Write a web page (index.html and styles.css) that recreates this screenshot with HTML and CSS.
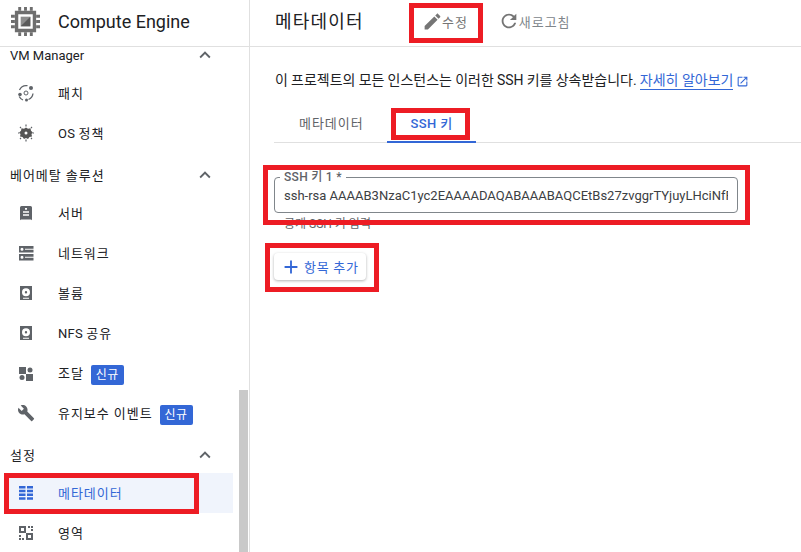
FILE: index.html
```html
<!DOCTYPE html>
<html lang="ko">
<head>
<meta charset="utf-8">
<title>메타데이터 - Compute Engine</title>
<link rel="stylesheet" href="styles.css">
</head>
<body>
<div class="app">
  <aside class="sidebar">
    <div class="brand">
      <svg class="chip" viewBox="0 0 30 30" aria-hidden="true">
        <path fill="#6e6e6e" d="M7.500 0h3v4h-3zM13.500 0h3v4h-3zM19.500 0h3v4h-3zM7.500 26h3v4h-3zM13.500 26h3v4h-3zM19.500 26h3v4h-3zM0 8h4v3H0zM0 13.500h4v3H0zM0 19h4v3H0zM26 8h4v3h-4zM26 13.500h4v3h-4zM26 19h4v3h-4z"/>
        <path fill="#6e6e6e" fill-rule="evenodd" d="M4 4h22v22H4zm3.500 3.500v15h15v-15z"/>
        <rect x="10" y="10" width="10" height="10" fill="#8c8c8c"/>
        <path fill="#5a5a5a" d="M20 10v10H10z"/>
      </svg>
      <span class="brand-name">Compute Engine</span>
    </div>
    <nav class="nav">
      <div class="nav-scroll">
        <div class="group"><span>VM Manager</span><svg class="chev" viewBox="0 0 24 24"><path d="M12 8l-6 6 1.410 1.410L12 10.830l4.590 4.580L18 14z"/></svg></div>
        <a class="item"><svg class="ico" viewBox="0 0 22 22"><circle cx="11" cy="11" r="2" fill="none" stroke="#5f6368" stroke-width="1"/><path fill="none" stroke="#5f6368" stroke-width="1.300" d="M4.500 8a7.500 7.500 0 0 1 8-4.300M18 11.500a7.500 7.500 0 0 1-4.500 6M8 18a7.500 7.500 0 0 1-3.800-3.500"/><circle cx="16" cy="6" r="2" fill="#5f6368"/><circle cx="11.500" cy="18" r="1.500" fill="#5f6368"/><circle cx="5" cy="12.500" r="1.800" fill="#5f6368"/></svg><span class="ko">패치</span></a>
        <a class="item"><svg class="ico" viewBox="0 0 22 22"><path fill="#555" d="M11 5.500l2 1.300 2.500-.5.500 2.500 1.800 1.700-1.300 1.500.5 2.500-2.500.5-1.500 1.900-2-1-2 1-1.500-1.900-2.500-.5.500-2.500-1.300-1.500L6 8.800l.5-2.500 2.500.5z"/><circle cx="11" cy="11" r="1.500" fill="#fff"/><path stroke="#5f6368" stroke-width="1.200" d="M11 2.500v2M11 17.500v2M3 11h1.500M17.500 11H19M5 5l1 1M16 16l1 1M17 5l-1 1M6 16l-1 1"/></svg><span><span class="en">OS</span> <span class="ko">정책</span></span></a>
        <div class="group spaced"><span class="ko">베어메탈 솔루션</span><svg class="chev" viewBox="0 0 24 24"><path d="M12 8l-6 6 1.410 1.410L12 10.830l4.590 4.580L18 14z"/></svg></div>
        <a class="item"><svg class="ico" viewBox="0 0 22 22"><path fill="#5f6368" fill-rule="evenodd" d="M6.500 4h9A1.500 1.500 0 0 1 17 5.500V17.500l-1 .8v-.8H6v.8l-1-.8V5.500A1.500 1.500 0 0 1 6.500 4zM10 6v1.800h2V6zM8 9.300v1.500h6V9.300zm0 3v1.500h6v-1.500z"/></svg><span class="ko">서버</span></a>
        <a class="item"><svg class="ico" viewBox="0 0 22 22"><path fill="#5f6368" fill-rule="evenodd" d="M4 4h14.500v6.500H4zm0 8h14.500v6.500H4zM7 5.700a1.500 1.500 0 1 0 0 3 1.500 1.500 0 0 0 0-3zm0 8a1.500 1.500 0 1 0 0 3 1.500 1.500 0 0 0 0-3zM10 6.700v1h8.500v-1zm0 8v1h8.500v-1z"/></svg><span class="ko">네트워크</span></a>
        <a class="item"><svg class="ico" viewBox="0 0 22 22"><path fill="#5f6368" fill-rule="evenodd" d="M5 4h12v14H5zm6 2.300a4 4 0 1 0 0 8 4 4 0 0 0 0-8zm0 2.800a1.200 1.200 0 1 1 0 2.400 1.200 1.200 0 0 1 0-2.400zM8 15.800v.9h6v-.9z"/></svg><span class="ko">볼륨</span></a>
        <a class="item"><svg class="ico" viewBox="0 0 22 22"><path fill="#5f6368" fill-rule="evenodd" d="M5 4h12v14H5zm6 2.300a4 4 0 1 0 0 8 4 4 0 0 0 0-8zm0 2.800a1.200 1.200 0 1 1 0 2.400 1.200 1.200 0 0 1 0-2.400zM8 15.800v.9h6v-.9z"/></svg><span><span class="en">NFS</span> <span class="ko">공유</span></span></a>
        <a class="item"><svg class="ico" viewBox="0 0 22 22"><path fill="#5f6368" d="M4 5h7v7H4zM11 12h7v7h-7z"/><circle cx="15" cy="8" r="2.500" fill="#5f6368"/><circle cx="7" cy="15.500" r="2.500" fill="#5f6368"/></svg><span class="ko">조달</span><em class="badge">신규</em></a>
        <a class="item"><svg class="ico" viewBox="0 0 24 24"><path fill="#5f6368" d="M22.700 19l-9.100-9.100c.9-2.300.4-5-1.500-6.900-2-2-5-2.400-7.400-1.300L9 6 6 9 1.600 4.700C.4 7.100.9 10.100 2.900 12.100c1.900 1.900 4.600 2.400 6.900 1.500l9.100 9.100c.4.400 1 .4 1.400 0l2.300-2.300c.5-.4.5-1.100.1-1.400z" transform="translate(2.500 2.500) scale(.8)"/></svg><span class="ko">유지보수 이벤트</span><em class="badge">신규</em></a>
        <div class="group spaced"><span class="ko">설정</span><svg class="chev" viewBox="0 0 24 24"><path d="M12 8l-6 6 1.410 1.410L12 10.830l4.590 4.580L18 14z"/></svg></div>
        <a class="item active"><svg class="ico" viewBox="0 0 22 22"><path fill="#3367d6" d="M4 4h6.500v2.500H4zM12 4h6v2.500h-6zM4 7.750h6.500v2.500H4zM12 7.750h6v2.500h-6zM4 11.500h6.500V14H4zM12 11.500h6V14h-6zM4 15.250h6.500v2.500H4zM12 15.250h6v2.500h-6z"/></svg><span class="ko">메타데이터</span></a>
        <a class="item"><svg class="ico" viewBox="0 0 22 22"><path fill="#5f6368" fill-rule="evenodd" d="M4 4h7v7H4zm2 2v3h3V6zM11 11h7v7h-7zm2 2v3h3v-3zM13 4h2v2h-2zM16 4h2v2h-2zM16 7h2v2h-2zM4 13h2v2H4zM4 16h2v2H4zM7 16h2v2H7z"/></svg><span class="ko">영역</span></a>
      </div>
      <div class="scrollbar"></div>
    </nav>
  </aside>
  <main class="main">
    <header class="topbar">
      <h1>메타데이터</h1>
      <button class="tool edit"><svg viewBox="0 0 24 24"><path d="M3 17.250V21h3.750L17.810 9.940l-3.750-3.750L3 17.250zM20.710 7.040c.39-.39.39-1.020 0-1.410l-2.340-2.340c-.39-.39-1.020-.39-1.410 0l-1.830 1.830 3.750 3.750 1.830-1.830z"/></svg><span class="ko">수정</span></button>
      <button class="tool refresh"><svg viewBox="0 0 24 24"><path d="M17.650 6.350C16.200 4.900 14.210 4 12 4c-4.420 0-7.990 3.580-7.990 8s3.570 8 7.990 8c3.730 0 6.840-2.550 7.730-6h-2.080c-.82 2.330-3.040 4-5.650 4-3.310 0-6-2.690-6-6s2.690-6 6-6c1.660 0 3.140.69 4.220 1.780L13 11h7V4l-2.350 2.350z"/></svg><span class="ko">새로고침</span></button>
    </header>
    <section class="content">
      <p class="desc"><span>이 프로젝트의 모든 인스턴스는 이러한 SSH 키를 상속받습니다.&nbsp;</span><a class="link">자세히 알아보기</a><svg class="ext" viewBox="0 0 24 24"><path d="M19 19H5V5h7V3H5c-1.110 0-2 .9-2 2v14c0 1.100.89 2 2 2h14c1.100 0 2-.9 2-2v-7h-2v7zM14 3v2h3.590l-9.830 9.830 1.410 1.410L19 6.410V10h2V3h-7z"/></svg></p>
      <div class="tabs">
        <div class="tab"><span class="ko">메타데이터</span></div>
        <div class="tab selected">SSH 키</div>
      </div>
      <div class="field">
        <span class="legend">SSH 키 1 *</span>
        <div class="value">ssh-rsa AAAAB3NzaC1yc2EAAAADAQABAAABAQCEtBs27zvggrTYjuyLHciNfRkJ2mVxQ</div>
      </div>
      <div class="hint">공개 SSH 키 입력</div>
      <button class="add"><svg viewBox="0 0 24 24"><path d="M19 13h-6v6h-2v-6H5v-2h6V5h2v6h6v2z"/></svg><span class="ko-add">항목 추가</span></button>
    </section>
  </main>
</div>
<div class="mark m-side"></div>
<div class="mark m-edit"></div>
<div class="mark m-tab"></div>
<div class="mark m-field"></div>
<div class="mark m-add"></div>
</body>
</html>
```
FILE: styles.css
```css
* { box-sizing: border-box; }
html, body { margin: 0; height: 100%; overflow: hidden; background: #fff; }
body {
  position: relative;
  font-family: Roboto, "Noto Sans CJK KR", sans-serif;
  color: #202124;
  font-size: 13px;
}
.app { display: flex; height: 552px; }
.ko { letter-spacing: .95px; }
.en { letter-spacing: .3px; }

.sidebar {
  width: 250px;
  flex: none;
  border-right: 1px solid #e0e0e0;
  display: flex;
  flex-direction: column;
}
.brand {
  height: 47px;
  flex: none;
  border-bottom: 1px solid #e0e0e0;
  display: flex;
  align-items: center;
  padding: 0 0 4px 11px;
}
.chip { width: 29px; height: 29px; margin-right: 18px; }
.brand-name { font-size: 18px; }
.nav { position: relative; flex: 1; overflow: hidden; }
.nav-scroll { margin-top: -10px; width: 233px; }
.group {
  height: 36px;
  display: flex;
  align-items: center;
  justify-content: space-between;
  padding: 0 18px 0 10px;
  font-size: 13px;
}
.group.spaced { margin-top: 4px; }
.group.spaced > span { padding-bottom: 2px; }
.chev { width: 22px; height: 22px; fill: #5f6368; margin-right: -1px; }
.item {
  height: 40px;
  display: flex;
  align-items: center;
  padding-left: 15px;
  font-size: 13px;
}
.item > span { padding-bottom: 2px; }
.ico { width: 22px; height: 22px; margin-right: 21px; flex: none; }
.item.active { background: #f0f4fc; color: #3367d6; margin-left: 4px; padding-left: 11px; }
.badge {
  font-style: normal;
  background: #3367d6;
  color: #fff;
  font-size: 12px;
  letter-spacing: .5px;
  line-height: 20px;
  height: 20px;
  padding: 0 5px;
  border-radius: 2px;
  margin: 4px 0 0 7px;
}
.scrollbar {
  position: absolute;
  right: 1px;
  top: 343px;
  bottom: 0;
  width: 9px;
  background: #c9c9c9;
}

.main { flex: 1; min-width: 0; }
.topbar {
  height: 47px;
  border-bottom: 1px solid #e0e0e0;
  display: flex;
  align-items: center;
  padding-left: 25px;
}
.topbar h1 { margin: 0; font-size: 18px; font-weight: 400; letter-spacing: 1.2px; width: 147px; position: relative; top: -3px; }
.tool {
  border: 0;
  background: none;
  padding: 0;
  font: inherit;
  font-size: 13px;
  color: #757575;
  display: flex;
  align-items: center;
  position: relative;
  top: -2px;
}
.tool svg { width: 21px; height: 21px; fill: #757575; margin-right: -1px; }
.tool.refresh { margin-left: 30px; color: #80868b; }
.tool.refresh svg { width: 22px; height: 22px; }

.content { padding-left: 25px; }
.desc { margin: 0; padding-top: 24px; height: 62px; font-size: 14px; line-height: 19px; display: flex; align-items: flex-start; white-space: nowrap; }
.desc > span { word-spacing: -.3px; }
.link { color: #3367d6; border-bottom: 1px solid #3367d6; height: 19px; }
.ext { width: 13px; height: 13px; fill: #3367d6; margin: 4px 0 0 3px; }
.tabs {
  height: 34px;
  border-bottom: 1px solid #e0e0e0;
  display: flex;
  margin-left: -1px;
}
.tab {
  height: 34px;
  font-size: 13px;
  color: #5f6368;
  line-height: 30px;
  padding: 0 25px;
  width: 113px;
  white-space: nowrap;
}
.tab.selected {
  width: 89px;
  text-align: center;
  padding: 0;
  font-weight: 500;
  letter-spacing: .4px;
  color: #3367d6;
  border-bottom: 2px solid #3367d6;
}
.field {
  position: relative;
  width: 464px;
  height: 36px;
  margin: 34px 0 0 -1px;
  border: 1px solid #80868b;
  border-radius: 4px;
  padding: 10px 9px 0;
}
.legend {
  position: absolute;
  left: 5px;
  top: -8px;
  background: #fff;
  padding: 0 4px;
  font-size: 12px;
  letter-spacing: .3px;
  font-weight: 500;
  color: #5f6368;
  line-height: 14px;
}
.value { overflow: hidden; white-space: nowrap; font-size: 13px; line-height: 16px; color: #3c4043; }
.hint { margin: 4px 0 0 9px; font-size: 12px; color: #5f6368; line-height: 14px; }
.add {
  margin: 22px 0 0 -1px;
  width: 92px;
  height: 27px;
  border: 0;
  border-radius: 4px;
  background: #fff;
  box-shadow: 0 1px 3px rgba(60, 64, 67, .4);
  color: #3367d6;
  font: inherit;
  font-size: 13px;
  display: flex;
  align-items: center;
  padding: 0 0 0 6px;
}
.add svg { width: 22px; height: 22px; fill: #3367d6; margin-right: 2px; flex: none; }
.ko-add { letter-spacing: .7px; white-space: nowrap; }

.mark { position: absolute; border: 5px solid #ed1c24; pointer-events: none; }
.m-side { left: 4px; top: 473px; width: 195px; height: 41px; }
.m-edit { left: 409px; top: 3px; width: 74px; height: 40px; }
.m-tab { left: 391px; top: 108px; width: 79px; height: 32px; }
.m-field { left: 263px; top: 165px; width: 487px; height: 60px; }
.m-add { left: 265px; top: 243px; width: 114px; height: 49px; }
```
